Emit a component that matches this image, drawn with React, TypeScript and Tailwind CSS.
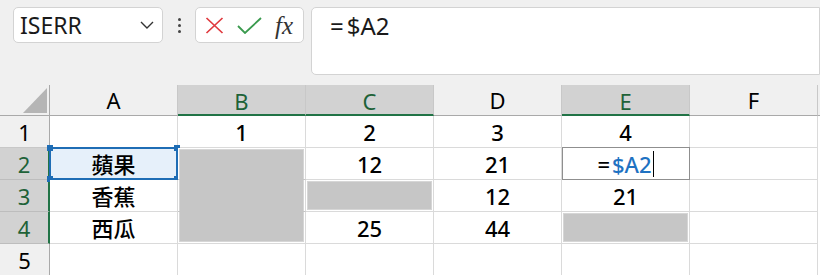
import React from "react";

const FONT = { fontFamily: '"Noto Sans", "Noto Sans CJK TC", sans-serif' };

const cols = ["A", "B", "C", "D", "E", "F"];
const selCols = new Set(["B", "C", "E"]);
const selRows = new Set([2, 3, 4]);

type Cell = { text?: string; gray?: boolean };

const data: Record<number, Cell[]> = {
  1: [{}, { text: "1" }, { text: "2" }, { text: "3" }, { text: "4" }, {}],
  2: [{ text: "蘋果" }, { gray: true }, { text: "12" }, { text: "21" }, {}, {}],
  3: [{ text: "香蕉" }, { gray: true }, { gray: true }, { text: "12" }, { text: "21" }, {}],
  4: [{ text: "西瓜" }, { gray: true }, { text: "25" }, { text: "44" }, { gray: true }, {}],
  5: [{}, {}, {}, {}, {}, {}],
};

function Handle({ className }: { className: string }) {
  return <div className={`absolute w-[6px] h-[6px] bg-[#1e6db5] ${className}`} />;
}

function DataCell({ r, c, cell }: { r: number; c: number; cell: Cell }) {
  const isA2 = r === 2 && c === 0;
  const isE2 = r === 2 && c === 4;
  const isB = c === 1 && cell.gray;
  let inner: React.ReactNode = null;
  if (cell.gray) {
    inner = (
      <div
        className={`absolute bg-[#c6c6c6] border border-[#d6d6d6] ${
          isB
            ? r === 2
              ? "left-[1px] right-[1px] top-[1px] bottom-0"
              : r === 4
              ? "left-[1px] right-[1px] top-0 bottom-[1px]"
              : "left-[1px] right-[1px] top-0 bottom-0"
            : "inset-[1px]"
        } ${isB ? (r === 2 ? "border-b-0" : r === 4 ? "border-t-0" : "border-y-0") : ""}`}
      />
    );
  }
  return (
    <div
      className={`relative h-[32px] flex items-center justify-center border-r border-b ${
        isB && r !== 4 ? "border-b-[#c6c6c6]" : "border-b-[#dadada]"
      } border-r-[#dadada] ${isA2 ? "bg-[#e6f0fa]" : "bg-white"} text-[22px] font-medium text-black leading-none`}
    >
      {inner}
      {cell.text && <span className="relative">{cell.text}</span>}
      {isA2 && (
        <>
          <div className="absolute left-[-1px] top-[-1px] right-[-1px] bottom-[-1px] border-2 border-[#1e6db5]" />
          <Handle className="left-[-3px] top-[-3px]" />
          <Handle className="right-[-3px] top-[-3px]" />
          <Handle className="left-[-3px] bottom-[-3px]" />
          <Handle className="right-[-3px] bottom-[-3px]" />
        </>
      )}
      {isE2 && (
        <>
          <div className="absolute left-0 top-[-1px] right-[-1px] bottom-[-1px] border border-[#8f8f8f]" />
          <span className="relative flex items-center">
            <span className="mr-[2px]">=</span>
            <span className="text-[#1f72c2]">$A2</span>
            <span className="w-[1px] h-[26px] bg-black ml-[1px]" />
          </span>
        </>
      )}
    </div>
  );
}

export default function App() {
  return (
    <div className="w-[820px] h-[275px] overflow-hidden bg-[#f0f0f0]" style={FONT}>
      {/* Toolbar */}
      <div className="h-[85px] flex items-start pt-[7px] pl-[13px] gap-0">
        <div className="w-[150px] h-[36px] bg-white border border-[#d3d3d3] rounded-[5px] flex items-center justify-between pl-[6px] pr-[8px]">
          <span className="text-[23px] text-[#1a1a1a] leading-none">ISERR</span>
          <svg width="14" height="8" viewBox="0 0 14 8">
            <path d="M1 1 L7 7 L13 1" fill="none" stroke="#333" strokeWidth="1.4" />
          </svg>
        </div>
        <div className="w-[32px] h-[36px] flex flex-col items-center justify-center gap-[3px]">
          <div className="w-[3px] h-[3px] bg-[#444] rounded-full" />
          <div className="w-[3px] h-[3px] bg-[#444] rounded-full" />
          <div className="w-[3px] h-[3px] bg-[#444] rounded-full" />
        </div>
        <div className="w-[109px] h-[36px] bg-white border border-[#d3d3d3] rounded-[5px] flex items-center pl-[9px] gap-[13px]">
          <svg width="19" height="17" viewBox="0 0 19 17">
            <path d="M1.5 1 L17.5 16 M17.5 1 L1.5 16" stroke="#e0393e" strokeWidth="1.7" fill="none" />
          </svg>
          <svg width="25" height="17" viewBox="0 0 25 17">
            <path d="M1 9 L8 16 L24 1" stroke="#3a9a4e" strokeWidth="1.8" fill="none" />
          </svg>
          <span
            className="text-[25px] italic text-[#333] leading-none"
            style={{ fontFamily: '"Liberation Serif", serif' }}
          >
            fx
          </span>
        </div>
        <div className="ml-[7px] flex-1 h-[68px] bg-white border border-[#d3d3d3] rounded-l-[5px] pl-[18px] pt-[3px]">
          <span className="text-[24px] text-[#1a1a1a] leading-[30px]">
            <span className="mr-[3px]">=</span>$A2
          </span>
        </div>
      </div>
      {/* Grid */}
      <div className="grid grid-cols-[50px_repeat(6,128px)_2px] bg-white">
        <div className="h-[31px] bg-[#f0f0f0] border-r border-r-[#a9a9a9] border-b border-b-[#a9a9a9] relative">
          <svg className="absolute left-[23px] top-[3px]" width="24" height="25" viewBox="0 0 24 25">
            <path d="M24 0 L24 25 L0 25 Z" fill="#b5b5b5" />
          </svg>
        </div>
        {cols.map((c) => {
          const sel = selCols.has(c);
          return (
            <div
              key={c}
              className={`h-[31px] flex items-center justify-center text-[22px] leading-none border-r border-r-[#c8c8c8] ${
                sel
                  ? "bg-[#d2d2d2] text-[#1e6238] border-b-2 border-b-[#217346]"
                  : "bg-[#f0f0f0] text-black border-b border-b-[#a9a9a9]"
              }`}
            >
              <span className={sel ? "mt-[2px]" : ""}>{c}</span>
            </div>
          );
        })}
        <div className="h-[31px] bg-[#f0f0f0] border-b border-b-[#a9a9a9]" />
        {[1, 2, 3, 4, 5].map((r) => {
          const sel = selRows.has(r);
          return (
            <React.Fragment key={r}>
              <div
                className={`h-[32px] flex items-center justify-center text-[22px] leading-none border-b ${
                  sel
                    ? "bg-[#d2d2d2] text-[#1e6238] border-r-2 border-r-[#217346] border-b-[#bdbdbd]"
                    : "bg-[#f0f0f0] text-black border-r border-r-[#a9a9a9] border-b-[#c8c8c8]"
                }`}
              >
                {r}
              </div>
              {data[r].map((cell, ci) => (
                <DataCell key={ci} r={r} c={ci} cell={cell} />
              ))}
              <div className="h-[32px] bg-white" />
            </React.Fragment>
          );
        })}
      </div>
    </div>
  );
}
